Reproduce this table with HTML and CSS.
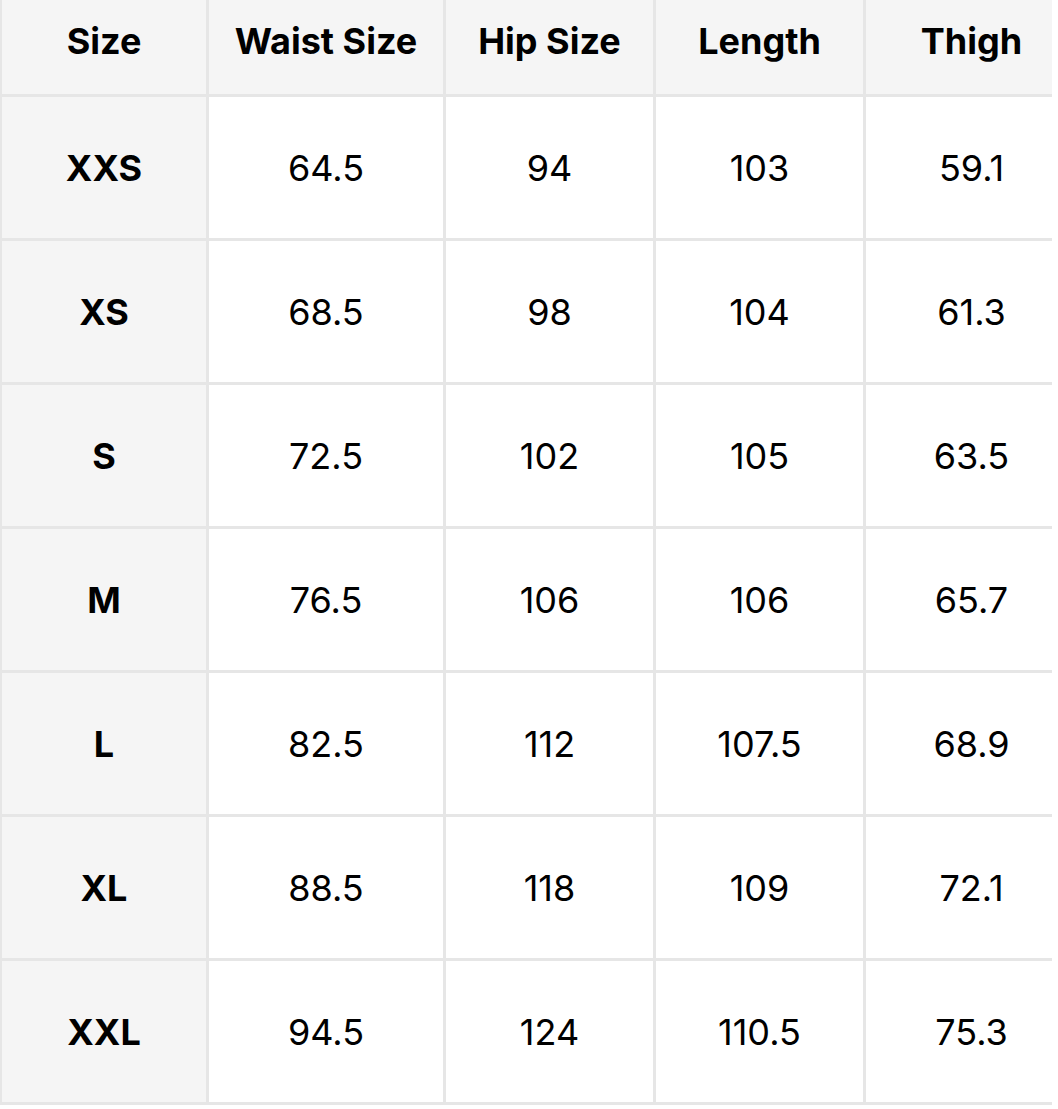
FILE: index.html
```html
<!DOCTYPE html>
<html lang="en">
<head>
<meta charset="utf-8">
<title>Size Chart</title>
<link rel="stylesheet" href="styles.css">
</head>
<body>
<div class="frame">
<div class="chart">
  <div class="cell head">Size</div><div class="cell head">Waist Size</div><div class="cell head">Hip Size</div><div class="cell head">Length</div><div class="cell head">Thigh</div>
  <div class="cell size">XXS</div><div class="cell">64.5</div><div class="cell">94</div><div class="cell">103</div><div class="cell">59.1</div>
  <div class="cell size">XS</div><div class="cell">68.5</div><div class="cell">98</div><div class="cell">104</div><div class="cell">61.3</div>
  <div class="cell size">S</div><div class="cell">72.5</div><div class="cell">102</div><div class="cell">105</div><div class="cell">63.5</div>
  <div class="cell size">M</div><div class="cell">76.5</div><div class="cell">106</div><div class="cell">106</div><div class="cell">65.7</div>
  <div class="cell size">L</div><div class="cell">82.5</div><div class="cell">112</div><div class="cell">107.5</div><div class="cell">68.9</div>
  <div class="cell size">XL</div><div class="cell">88.5</div><div class="cell">118</div><div class="cell">109</div><div class="cell">72.1</div>
  <div class="cell size">XXL</div><div class="cell">94.5</div><div class="cell">124</div><div class="cell">110.5</div><div class="cell">75.3</div>
</div>
</div>
</body>
</html>
```
FILE: styles.css
```css
html, body {
  margin: 0;
  padding: 0;
  background: #ffffff;
  overflow: hidden;
}
.frame {
  width: 1052px;
  overflow: hidden;
}
.chart {
  display: grid;
  grid-template-columns: 207px 237px 210px 210px 214px;
  grid-template-rows: 97px repeat(7, 144px);
  width: max-content;
  border-left: 2px solid #e6e6e6;
  font-family: Inter, "Liberation Sans", sans-serif;
  color: #000000;
}
.cell {
  box-sizing: border-box;
  display: flex;
  align-items: center;
  justify-content: center;
  border-right: 3px solid #e6e6e6;
  border-bottom: 3px solid #e6e6e6;
  font-size: 36px;
  font-weight: 400;
  background: #ffffff;
}
.head {
  background: #f5f5f5;
  font-weight: 700;
  padding-bottom: 12px;
}
.size {
  background: #f5f5f5;
  font-weight: 700;
}
```
